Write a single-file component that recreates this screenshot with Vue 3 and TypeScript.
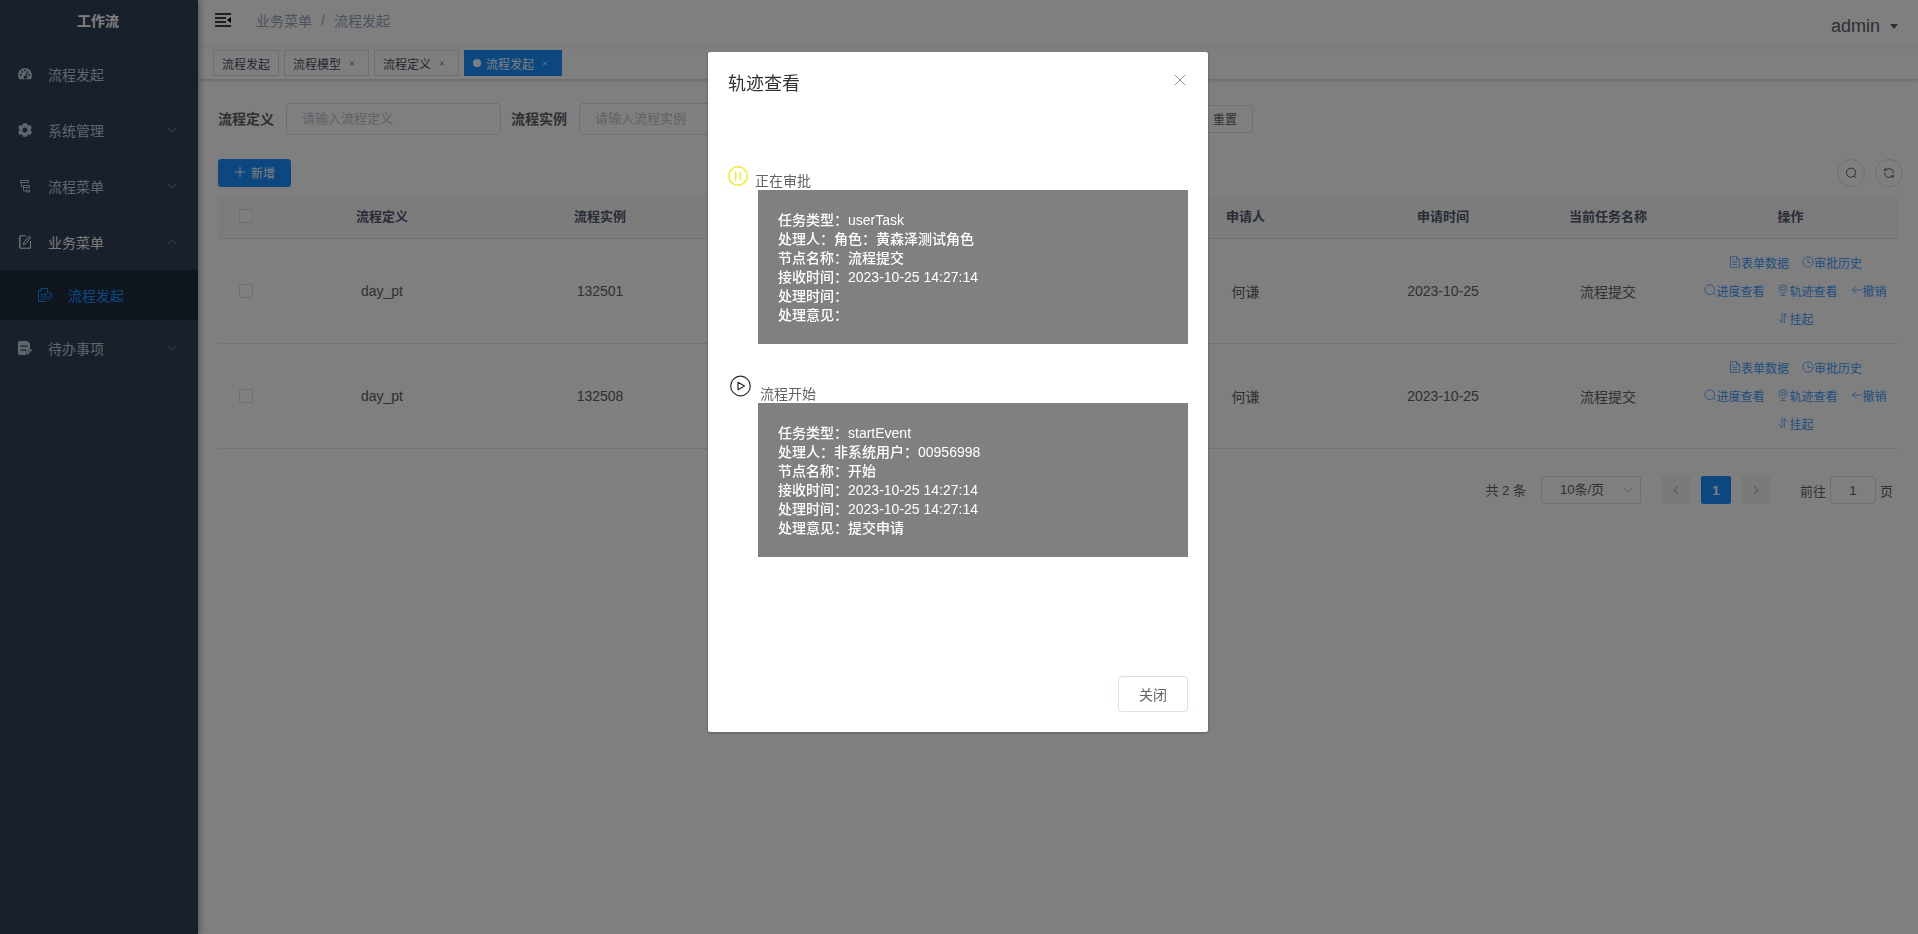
<script setup lang="ts">
import { ref } from 'vue'

type Menu = { label: string; icon: string; arrow?: 'down' | 'up'; open?: boolean; children?: { label: string; icon: string }[] }
type Tab = { label: string; closable: boolean; active: boolean }
type Row = { definition: string; instance: string; applicant: string; time: string; task: string }
type Trace = { title: string; kind: 'pause' | 'play'; lines: [string, string][] }

const menus: Menu[] = [
  { label: '流程发起', icon: 'gauge' },
  { label: '系统管理', icon: 'gear', arrow: 'down' },
  { label: '流程菜单', icon: 'tree', arrow: 'down' },
  { label: '业务菜单', icon: 'edit', arrow: 'up', open: true, children: [{ label: '流程发起', icon: 'docs' }] },
  { label: '待办事项', icon: 'todo', arrow: 'down' },
]

const tabs: Tab[] = [
  { label: '流程发起', closable: false, active: false },
  { label: '流程模型', closable: true, active: false },
  { label: '流程定义', closable: true, active: false },
  { label: '流程发起', closable: true, active: true },
]

const rows: Row[] = [
  { definition: 'day_pt', instance: '132501', applicant: '何谦', time: '2023-10-25', task: '流程提交' },
  { definition: 'day_pt', instance: '132508', applicant: '何谦', time: '2023-10-25', task: '流程提交' },
]

const actions = [
  { label: '表单数据', icon: 'document' },
  { label: '审批历史', icon: 'clock' },
  { label: '进度查看', icon: 'search' },
  { label: '轨迹查看', icon: 'pin' },
  { label: '撤销', icon: 'back' },
  { label: '挂起', icon: 'sort' },
]

const traces: Trace[] = [
  {
    title: '正在审批',
    kind: 'pause',
    lines: [
      ['任务类型', 'userTask'],
      ['处理人', '角色：黄森泽测试角色'],
      ['节点名称', '流程提交'],
      ['接收时间', '2023-10-25 14:27:14'],
      ['处理时间', ''],
      ['处理意见', ''],
    ],
  },
  {
    title: '流程开始',
    kind: 'play',
    lines: [
      ['任务类型', 'startEvent'],
      ['处理人', '非系统用户：00956998'],
      ['节点名称', '开始'],
      ['接收时间', '2023-10-25 14:27:14'],
      ['处理时间', '2023-10-25 14:27:14'],
      ['处理意见', '提交申请'],
    ],
  },
]

const definition = ref('')
const instance = ref('')
const pageSize = ref('10')
const jump = ref('1')
</script>

<template>
  <div class="app">
    <aside class="sidebar">
      <h1 class="logo">工作流</h1>
      <nav>
        <template v-for="m in menus" :key="m.label">
          <a href="#" class="menu-item" :class="{ open: m.open }">
            <svg class="menu-icon" viewBox="0 0 14 14" fill="none" stroke="currentColor">
              <template v-if="m.icon === 'gauge'">
                <path fill="currentColor" stroke="none" fill-rule="evenodd" d="M7 1a7 7 0 0 0-7 7c0 1.700.5 3 1.200 4.200h11.600C13.500 11 14 9.700 14 8a7 7 0 0 0-7-7zM2 7.200h1.700v1.700H2zM3.400 3.900h1.700v1.700H3.400zM6.200 2.500h1.600v1.700H6.200zM10.400 7.200h1.700v1.700h-1.700zM9.600 4l.9.500-1.900 4.400a1.700 1.700 0 1 1-1.200-.4z" />
              </template>
              <template v-else-if="m.icon === 'gear'">
                <path fill="currentColor" stroke="none" fill-rule="evenodd" d="M5 .2h4l.5 1.700 1.300.7 1.600-.7 1.600 3-1.200 1.200v1.800l1.200 1.200-1.600 3-1.600-.7-1.300.7-.5 1.700H5l-.5-1.700-1.300-.7-1.600.7L0 9.100l1.200-1.200V6.100L0 4.900l1.600-3 1.600.7 1.300-.7zM7 4.500a2.500 2.500 0 1 0 0 5 2.500 2.500 0 0 0 0-5z" />
              </template>
              <template v-else-if="m.icon === 'tree'">
                <path d="M2.500 1.500h8v2h-8zM5.500 6.500h6v2h-6zM8.500 11h3v2h-3zM3.500 3.500v4h2M5.500 8.500V12h3" />
              </template>
              <template v-else-if="m.icon === 'edit'">
                <path d="M8 .8H1.800v12.400h10.700V6M.8 3.500h2M.8 6h2M.8 8.500h2M.8 11h2M5.500 9.800l.5-2.500L11 1.300l1.700 1.200L7.800 8.600z" />
              </template>
              <template v-else>
                <path fill="currentColor" stroke="none" fill-rule="evenodd" d="M1.500 0h8L12 2.500v6L8.500 12l-1 2h-6A1.500 1.500 0 0 1 0 12.500v-11A1.500 1.500 0 0 1 1.500 0zM2.500 4.500v1.200h7V4.500zM2.500 8.500v1.200h6V8.500z" />
                <path stroke-width="1.600" d="M8.700 13.500l4.800-5" />
              </template>
            </svg>
            <span>{{ m.label }}</span>
            <svg v-if="m.arrow" class="menu-arrow" viewBox="0 0 12 12" fill="none" stroke="currentColor">
              <path :d="m.arrow === 'down' ? 'M1.500 3.500L6 7.700 10.500 3.500' : 'M1.500 8L6 3.800 10.500 8'" />
            </svg>
          </a>
          <a v-for="c in m.children ?? []" :key="c.label" href="#" class="menu-item sub">
            <svg class="menu-icon" viewBox="0 0 14 14" fill="none" stroke="currentColor">
              <path d="M8 13.500H.5V3L3.500.5h6V4M3.500.5V3h-3M2.500 6.500h4M2.500 9h4M2.500 11.300h4" />
              <path d="M10.500 4.500l3 1.200v3c0 1.500-1.200 2.500-3 3.300-1.800-.8-3-1.800-3-3.300v-3zM9 8.200l1.200 1.200 2-2.200" />
            </svg>
            <span>{{ c.label }}</span>
          </a>
        </template>
      </nav>
    </aside>

    <div class="main">
      <header class="navbar">
        <button class="hamburger" aria-label="折叠菜单">
          <svg viewBox="0 0 16 14" width="16" height="14" fill="none" stroke="currentColor" stroke-width="1.600">
            <path d="M0 1h16M0 5h11M0 9h11M0 13h16" />
            <path d="M16 4v6l-4-3z" fill="currentColor" stroke="none" />
          </svg>
        </button>
        <nav class="breadcrumb"><span>业务菜单</span><i>/</i><span>流程发起</span></nav>
        <button class="user">admin
          <svg viewBox="0 0 8 5" width="8" height="5"><path d="M0 0h8L4 5z" fill="currentColor" /></svg>
        </button>
      </header>

      <div class="tags">
        <a v-for="(t, i) in tabs" :key="i" href="#" class="tag" :class="{ active: t.active }">
          <span v-if="t.active" class="dot"></span>
          <span>{{ t.label }}</span>
          <svg v-if="t.closable" class="tag-close" viewBox="0 0 16 16" stroke="currentColor" stroke-width="0.800"><path d="M6 6.500l4 4M10 6.500l-4 4" /></svg>
        </a>
      </div>

      <main class="content">
        <form class="search" @submit.prevent>
          <label for="definition">流程定义</label>
          <input id="definition" v-model="definition" type="text" placeholder="请输入流程定义" />
          <label for="instance">流程实例</label>
          <input id="instance" v-model="instance" type="text" placeholder="请输入流程实例" />
          <button type="reset" class="btn reset">重置</button>
        </form>

        <div class="toolbar">
          <button class="btn primary">
            <svg viewBox="0 0 12 12" width="12" height="12" stroke="currentColor"><path d="M6 1v10M1 6h10" /></svg>
            新增
          </button>
          <div class="tools">
            <button class="circle" aria-label="搜索">
              <svg viewBox="0 0 12 12" width="12" height="12" fill="none" stroke="currentColor"><circle cx="6" cy="5.700" r="4.600" /><path d="M9.200 9l2 2" /></svg>
            </button>
            <button class="circle" aria-label="刷新">
              <svg viewBox="0 0 12 12" width="12" height="12" fill="none" stroke="currentColor"><path d="M1.800 7.500A4.400 4.400 0 0 0 8.500 9.600M10.200 4.500A4.400 4.400 0 0 0 3.500 2.400M1.700 4.200V2h2.200M2 2.200l1.800 1.600M10.300 7.800V10H8.100M10 9.800L8.200 8.200M1.800 7.500V5.500M10.200 4.500v2" /></svg>
            </button>
          </div>
        </div>

        <table class="grid">
          <colgroup>
            <col class="c-check" /><col class="c-name" /><col class="c-name" /><col />
            <col class="c-user" /><col class="c-time" /><col class="c-task" /><col class="c-ops" />
          </colgroup>
          <thead>
            <tr>
              <th><input type="checkbox" aria-label="全选" /></th>
              <th>流程定义</th>
              <th>流程实例</th>
              <td></td>
              <th>申请人</th>
              <th>申请时间</th>
              <th>当前任务名称</th>
              <th>操作</th>
            </tr>
          </thead>
          <tbody>
            <tr v-for="r in rows" :key="r.instance">
              <td><input type="checkbox" :aria-label="r.instance" /></td>
              <td>{{ r.definition }}</td>
              <td>{{ r.instance }}</td>
              <td></td>
              <td>{{ r.applicant }}</td>
              <td>{{ r.time }}</td>
              <td>{{ r.task }}</td>
              <td>
                <div class="ops">
                  <button v-for="a in actions" :key="a.label" class="op">
                    <svg viewBox="0 0 12 12" width="12" height="12" fill="none" stroke="currentColor" stroke-width="0.800">
                      <path v-if="a.icon === 'document'" d="M1.500.7h6l3 3v7.600h-9zM7.500.7v3h3M3.500 4h2M3.500 6.200h5M3.500 8.500h5" />
                      <path v-else-if="a.icon === 'clock'" d="M6 .8a5.200 5.200 0 1 0 0 10.400A5.200 5.200 0 0 0 6 .8zM6 3v3.500h3" />
                      <path v-else-if="a.icon === 'search'" d="M5.800.8a4.900 4.900 0 1 0 0 9.800 4.900 4.900 0 0 0 0-9.800zM9.200 9.200l2 2" />
                      <path v-else-if="a.icon === 'pin'" d="M6 10c2.700-1.800 4-3.500 4-5.300A4 4 0 0 0 2 4.700C2 6.500 3.300 8.200 6 10zM6 3a1.700 1.700 0 1 0 0 3.400A1.700 1.700 0 0 0 6 3zM3.500 11.400h5" />
                      <path v-else-if="a.icon === 'back'" d="M1.500 6H11M5 2.500L1.500 6 5 9.500" />
                      <path v-else d="M5 .8v10L1.500 7.500M7.300 11.200v-10l3 3.500" />
                    </svg><span>{{ a.label }}</span>
                  </button>
                </div>
              </td>
            </tr>
          </tbody>
        </table>

        <div class="pagination">
          <span class="total">共 2 条</span>
          <div class="size">
            <select v-model="pageSize" aria-label="每页条数"><option value="10">10条/页</option></select>
            <svg viewBox="0 0 12 12" width="12" height="12" fill="none" stroke="currentColor"><path d="M2 4l4 4 4-4" /></svg>
          </div>
          <div class="pager">
            <button class="page" disabled aria-label="上一页">
              <svg viewBox="0 0 12 12" width="12" height="12" fill="none" stroke="currentColor" stroke-width="1.600"><path d="M8 2L4 6l4 4" /></svg>
            </button>
            <button class="page current">1</button>
            <button class="page" disabled aria-label="下一页">
              <svg viewBox="0 0 12 12" width="12" height="12" fill="none" stroke="currentColor" stroke-width="1.600"><path d="M4 2l4 4-4 4" /></svg>
            </button>
          </div>
          <label class="jump">前往<input v-model="jump" type="text" />页</label>
        </div>
      </main>
    </div>

    <div class="overlay">
      <section class="dialog" role="dialog" aria-modal="true" aria-labelledby="dialog-title">
        <header class="dialog-head">
          <h2 id="dialog-title">轨迹查看</h2>
          <button class="close" aria-label="关闭窗口">
            <svg viewBox="0 0 16 16" width="16" height="16" stroke="currentColor"><path d="M3 3l10 10M13 3L3 13" /></svg>
          </button>
        </header>
        <div class="dialog-body">
          <div class="traces">
            <article v-for="t in traces" :key="t.title" class="trace">
              <div class="trace-head" :class="t.kind">
                <svg v-if="t.kind === 'pause'" viewBox="0 0 20 20" width="20" height="20" fill="none" stroke="currentColor" stroke-width="1.500">
                  <circle cx="10" cy="10" r="9.200" /><path d="M7.700 5.700v8.600M12.300 5.700v8.600" />
                </svg>
                <svg v-else viewBox="0 0 24 24" width="24" height="24" fill="none" stroke="currentColor" stroke-width="1.200">
                  <circle cx="12.500" cy="12" r="9.800" /><path d="M10 8.200v7.600l6.500-3.800z" stroke-linejoin="round" />
                </svg>
                <span>{{ t.title }}</span>
              </div>
              <div class="card">
                <p v-for="l in t.lines" :key="l[0]">{{ l[0] }}：{{ l[1] }}</p>
              </div>
            </article>
          </div>
        </div>
        <footer class="dialog-foot"><button class="btn-close">关闭</button></footer>
      </section>
    </div>
  </div>
</template>

<style>
body {
  margin: 0;
  background: #fff;
}
</style>

<style scoped>
.app,
.app button,
.app input,
.app select {
  font-family: "Liberation Sans", "Noto Sans CJK SC", sans-serif;
}
.app {
  display: flex;
  min-height: 100vh;
  font-size: 14px;
  color: #606266;
}
.app *,
.app {
  box-sizing: border-box;
}
button {
  padding: 0;
  border: 0;
  background: none;
  color: inherit;
  cursor: pointer;
}
a {
  color: inherit;
  text-decoration: none;
}
h1,
h2,
p {
  margin: 0;
}
svg {
  flex: none;
}

.sidebar {
  position: relative;
  flex: none;
  width: 198px;
  background: #304156;
  box-shadow: 2px 0 6px rgba(0, 21, 41, 0.35);
  color: #bfcbd9;
}
.logo {
  height: 46px;
  line-height: 42px;
  padding-right: 2px;
  font-size: 14px;
  text-align: center;
  color: #fff;
}
.menu-item {
  display: flex;
  align-items: center;
  gap: 16px;
  height: 56px;
  padding: 0 20px 0 18px;
}
.menu-icon {
  width: 14px;
  height: 14px;
}
.menu-arrow {
  width: 12px;
  height: 12px;
  margin-left: auto;
  color: #7d8794;
}
.menu-item.open {
  color: #f4f4f5;
}
.menu-item.sub {
  height: 50px;
  padding-left: 38px;
  background: #1f2d3d;
  color: #1890ff;
}

.main {
  flex: 1;
  min-width: 0;
}
.navbar {
  display: flex;
  align-items: center;
  height: 46px;
  padding: 0 20px 6px 17px;
  box-shadow: 0 1px 4px rgba(0, 21, 41, 0.08);
}
.hamburger {
  display: flex;
  color: #000;
}
.breadcrumb {
  display: flex;
  align-items: center;
  margin-left: 25px;
  color: #97a8be;
}
.breadcrumb i {
  width: 22px;
  font-style: normal;
  text-align: center;
  color: #97a8be;
}
.user {
  display: flex;
  align-items: center;
  gap: 10px;
  margin-left: auto;
  padding-top: 12px;
  font-size: 18px;
  color: #5a5e66;
}
.tags {
  display: flex;
  gap: 5px;
  height: 34px;
  padding: 4px 15px 0;
  border-bottom: 1px solid #d8dce5;
  box-shadow: 0 1px 3px rgba(0, 0, 0, 0.12), 0 0 3px rgba(0, 0, 0, 0.04);
}
.tag {
  display: flex;
  align-items: center;
  gap: 3px;
  height: 26px;
  padding: 0 8px;
  border: 1px solid #d8dce5;
  font-size: 12px;
  color: #495060;
}
.tag.active {
  border-color: #1890ff;
  background: #1890ff;
  color: #fff;
}
.dot {
  width: 8px;
  height: 8px;
  margin-right: 2px;
  border-radius: 50%;
  background: #fff;
}
.tag-close {
  width: 16px;
  height: 16px;
}

.content {
  padding: 20px;
}
.search {
  display: flex;
  align-items: center;
  height: 38px;
  margin-bottom: 21px;
}
.search label {
  margin-right: 12px;
  padding-bottom: 2px;
  font-weight: 700;
}
.search input {
  width: 215px;
  height: 32px;
  margin-right: 10px;
  padding: 0 15px 2px;
  border: 1px solid #dcdfe6;
  border-radius: 4px;
  background: #fff;
  font-size: 13px;
  color: #606266;
}
.search input::placeholder {
  color: #c0c4cc;
}
.btn {
  display: flex;
  align-items: center;
  gap: 5px;
  height: 28px;
  padding: 0 15px 2px;
  border: 1px solid #dcdfe6;
  border-radius: 3px;
  font-size: 12px;
}
.btn.reset {
  width: 73px;
  justify-content: flex-end;
  margin-left: 376px;
}
.btn.primary {
  border-color: #1890ff;
  background: #1890ff;
  color: #fff;
}
.toolbar {
  display: flex;
  justify-content: space-between;
  margin: 0 -5px 8px 0;
}
.tools {
  display: flex;
  gap: 10px;
}
.circle {
  display: flex;
  align-items: center;
  justify-content: center;
  width: 28px;
  height: 28px;
  border: 1px solid #dcdfe6;
  border-radius: 50%;
}

.grid {
  width: 100%;
  border-collapse: separate;
  border-spacing: 0;
  table-layout: fixed;
}
.c-check {
  width: 55px;
}
.c-name {
  width: 218px;
}
.c-user,
.c-ops {
  width: 215px;
}
.c-time {
  width: 180px;
}
.c-task {
  width: 150px;
}
.grid th,
.grid td {
  padding: 10px;
  border-bottom: 1px solid #dfe6ec;
  text-align: center;
}
.grid thead th,
.grid thead td {
  height: 44px;
  padding: 0 0 2px;
  background: #f8f8f9;
  font-size: 13px;
  color: #515a6e;
}
input[type="checkbox"] {
  appearance: none;
  display: block;
  width: 14px;
  height: 14px;
  margin: 0 auto;
  border: 1px solid #dcdfe6;
  border-radius: 2px;
  background: #fff;
}
.grid tbody td:first-child {
  padding: 0;
}
.ops {
  display: flex;
  flex-wrap: wrap;
  justify-content: center;
  column-gap: 13px;
  padding-left: 10px;
}
.op {
  display: flex;
  align-items: center;
  height: 28px;
  padding-bottom: 2px;
  font-size: 12px;
  color: #409eff;
}

.pagination {
  display: flex;
  align-items: center;
  justify-content: flex-end;
  height: 28px;
  margin-top: 27px;
  padding-right: 5px;
  font-size: 13px;
}
.total {
  margin-right: 15px;
  padding-bottom: 2px;
}
.size {
  display: grid;
  align-items: center;
  width: 100px;
  height: 28px;
  margin-right: 20px;
}
.size select,
.size svg {
  grid-area: 1 / 1;
}
.size select {
  appearance: none;
  width: 100%;
  height: 100%;
  padding: 0 18px 2px;
  border: 1px solid #dcdfe6;
  border-radius: 3px;
  background: #fff;
  font-size: 13px;
  color: #606266;
}
.size svg {
  justify-self: end;
  margin-right: 7px;
  color: #c0c4cc;
}
.pager {
  display: flex;
  gap: 10px;
  margin-right: 29px;
}
.page {
  display: flex;
  align-items: center;
  justify-content: center;
  width: 30px;
  height: 28px;
  border-radius: 2px;
  background: #f4f4f5;
  font-size: 13px;
  font-weight: 700;
  color: #c0c4cc;
}
.page.current {
  background: #1890ff;
  color: #fff;
}
.jump {
  display: flex;
  align-items: center;
  gap: 4px;
}
.jump input {
  width: 46px;
  height: 28px;
  padding: 0;
  border: 1px solid #dcdfe6;
  border-radius: 3px;
  font-size: 13px;
  text-align: center;
  color: #606266;
}

.overlay {
  position: fixed;
  inset: 0;
  padding: 52px 2px 52px 0;
  background: rgba(0, 0, 0, 0.5);
}
.dialog {
  width: 500px;
  margin: 0 auto;
  border-radius: 2px;
  background: #fff;
  box-shadow: 0 1px 3px rgba(0, 0, 0, 0.3);
}
.dialog-head {
  display: flex;
  align-items: flex-start;
  justify-content: space-between;
  padding: 20px 20px 10px;
}
.dialog-head h2 {
  font-size: 18px;
  font-weight: 400;
  line-height: 24px;
  color: #303133;
}
.close {
  display: flex;
  color: #909399;
}
.dialog-body {
  padding: 30px 20px;
}
.traces {
  min-height: 500px;
}
.trace {
  padding-top: 30px;
}
.trace-head {
  display: flex;
  align-items: flex-end;
  line-height: 17px;
}
.trace-head.pause {
  gap: 7px;
}
.trace-head.play {
  gap: 8px;
}
.pause svg {
  margin-bottom: 4px;
  color: #f4ea2a;
}
.play svg {
  margin-bottom: 5px;
  color: #2c2c2c;
}
.card {
  margin-left: 30px;
  padding: 21px 20px 19px;
  background: #808080;
  font-weight: 500;
  line-height: 19px;
  color: #fff;
}
.dialog-foot {
  display: flex;
  justify-content: flex-end;
  padding: 10px 20px 20px;
}
.btn-close {
  height: 36px;
  padding: 0 20px;
  border: 1px solid #dcdfe6;
  border-radius: 4px;
  background: #fff;
  font-size: 14px;
}
</style>
